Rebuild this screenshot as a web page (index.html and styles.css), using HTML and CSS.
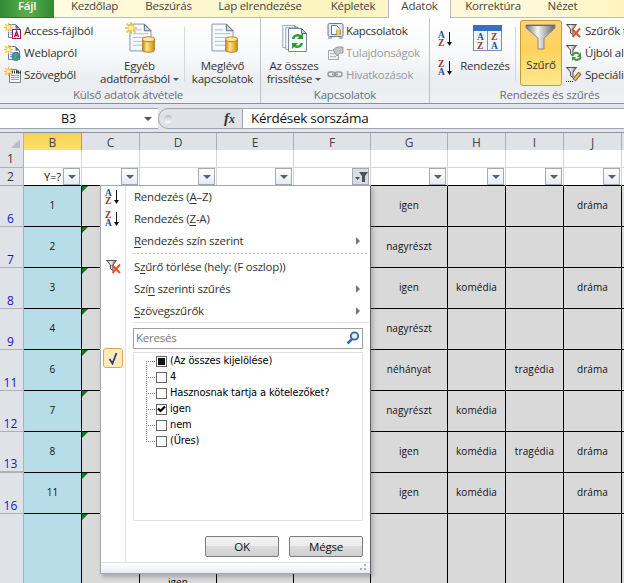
FILE: index.html
```html
<!DOCTYPE html>
<html lang="hu">
<head>
<meta charset="utf-8">
<title>Adatok</title>
<link rel="stylesheet" href="styles.css">
</head>
<body>
<svg class="defs" width="0" height="0">
  <defs>
    <linearGradient id="gold" x1="0" x2="1"><stop offset="0" stop-color="#c98a1c"/><stop offset=".35" stop-color="#ffe68a"/><stop offset="1" stop-color="#d08c16"/></linearGradient>
    <linearGradient id="steel" x1="0" x2="1"><stop offset="0" stop-color="#777"/><stop offset=".4" stop-color="#f4f4f4"/><stop offset="1" stop-color="#666"/></linearGradient>
    <symbol id="star" viewBox="0 0 12 12"><path d="M6 0v12M0 6h12M1.500 1.500l9 9M10.500 1.500l-9 9" stroke="#eebf3a" stroke-width="1.700"/><circle cx="6" cy="6" r="2.300" fill="#fff3a0"/></symbol>
    <symbol id="page" viewBox="0 0 24 30"><path d="M1 1h15l7 7v21H1z" fill="#f7fafe" stroke="#7f93ad"/><path d="M16 1v7h7z" fill="#c9d8ea" stroke="#4d6888"/><path d="M4 7h9M4 11h16M4 15h16M4 19h16M4 23h16" stroke="#a9bdd8"/></symbol>
    <symbol id="mini" viewBox="0 0 12 14"><path d="M.5.5h7l4 4v9H.5z" fill="#f7fafe" stroke="#6b819f"/><path d="M7.500.5v4h4z" fill="#4d6888"/><path d="M2 6.500h8M2 8.500h8M2 10.500h8" stroke="#8ea6c8"/></symbol>
    <symbol id="drum" viewBox="0 0 12 16"><path d="M.5 3v10c0 3 11 3 11 0V3z" fill="url(#gold)" stroke="#b98222"/><ellipse cx="6" cy="3" rx="5.500" ry="2.300" fill="#ffe9a0" stroke="#c58b20"/></symbol>
    <symbol id="az" viewBox="0 0 16 17"><text x="1" y="7.500" class="la">A</text><text x="1" y="16" class="lz">Z</text><path d="M12.500 2v13" stroke="#111"/><path d="M10 12h5l-2.500 4z" fill="#111"/></symbol>
    <symbol id="za" viewBox="0 0 16 17"><text x="1" y="7.500" class="lz">Z</text><text x="1" y="16" class="la">A</text><path d="M12.500 2v13" stroke="#111"/><path d="M10 12h5l-2.500 4z" fill="#111"/></symbol>
    <symbol id="funnel" viewBox="0 0 11 11"><path d="M.5.5h10L7 5v5.500L4.500 9V5z" fill="url(#steel)" stroke="#555"/></symbol>
    <symbol id="clear" viewBox="0 0 15 14"><use href="#funnel" width="11" height="11"/><path d="M6 5l8 8M14 4.500L6.500 13" stroke="#e4502c" stroke-width="2"/></symbol>
  </defs>
</svg>

<div class="app">
  <nav class="tabs">
    <span class="tab file">Fájl</span>
    <span class="tab home">Kezdőlap</span>
    <span class="tab insert">Beszúrás</span>
    <span class="tab layout">Lap elrendezése</span>
    <span class="tab formulas">Képletek</span>
    <span class="tab active">Adatok</span>
    <span class="tab review">Korrektúra</span>
    <span class="tab view">Nézet</span>
  </nav>

  <div class="ribbon">
    <section class="group g-ext">
      <div class="tools">
        <div class="stack">
          <div class="small"><svg width="17" height="16"><use href="#mini" x="4" y="1" width="12" height="14"/><use href="#star" width="9" height="9"/><rect x="8.500" y="6.500" width="8" height="9" fill="#fff" stroke="#a3174e"/><path d="M10.500 14l2-5.500 2 5.500M11 12.500h3" stroke="#a3174e" stroke-width="1.300" fill="none"/></svg><span>Access-fájlból</span></div>
          <div class="small"><svg width="17" height="16"><use href="#mini" x="4" y="1" width="12" height="14"/><use href="#star" width="9" height="9"/><circle cx="12" cy="11.500" r="4.500" fill="#3f7ebd"/><path d="M9 10l3-2 2 2-2 3 3 1-2 2-3-2z" fill="#4faa51"/></svg><span>Weblapról</span></div>
          <div class="small"><svg width="17" height="16"><use href="#mini" x="5" y="2" width="12" height="14"/><use href="#star" width="9" height="9"/><path d="M8 5h9" stroke="#333" stroke-dasharray="1 1" stroke-width="3"/></svg><span>Szövegből</span></div>
        </div>
        <div class="big other"><svg width="32" height="34"><use href="#page" x="5" y="2" width="23" height="29"/><use href="#star" x="1" y="1" width="12" height="12"/><use href="#drum" x="18" y="15" width="13" height="17"/></svg><span>Egyéb</span><span>adatforrásból<i class="drop"></i></span></div>
        <div class="sep"></div>
        <div class="big existing"><svg width="32" height="34"><use href="#page" x="4" y="2" width="23" height="29"/><use href="#drum" x="18" y="15" width="13" height="17"/></svg><span>Meglévő</span><span>kapcsolatok</span></div>
      </div>
      <h2>Külső adatok átvétele</h2>
    </section>

    <section class="group g-conn">
      <div class="tools">
        <div class="big refresh"><svg width="32" height="34"><use href="#page" x="4" y="3" width="19" height="25"/><use href="#page" x="7" y="5" width="19" height="25"/><path d="M10.500 7.500h13l5 5v18h-18z" fill="#fff" stroke="#748aa4"/><path d="M23.500 7.500v5h5z" fill="#c9d8ea" stroke="#4d6888"/><path d="M15 18c1-4 6-5 8-2M24 22c-1 4-6 5-8 2" fill="none" stroke="#2f9a3a" stroke-width="2.500"/><path d="M25 12v6h-6zM14 28v-6h6z" fill="#2f9a3a"/></svg><span>Az összes</span><span>frissítése<i class="drop"></i></span></div>
        <div class="stack">
          <div class="small"><svg width="17" height="16"><rect x="1" y=".5" width="15" height="13" rx="1.500" fill="#dfe7f1" stroke="#627a98"/><path d="M1 15h4M12 15h4" stroke="#627a98"/><path d="M4.500 2.500h5l3 3v6h-8z" fill="#fff" stroke="#617893"/><use href="#drum" x="9" y="5" width="5" height="8"/></svg><span>Kapcsolatok</span></div>
          <div class="small off"><svg width="17" height="16"><rect x="1.500" y="5.500" width="10" height="9" fill="#eee" stroke="#aaa"/><path d="M3 8.500h6M3 11.500h6" stroke="#bbb"/><path d="M6 5l4-3h6v6h-3l-3 3z" fill="#c4c4c4" stroke="#999"/></svg><span>Tulajdonságok</span></div>
          <div class="small off"><svg width="17" height="16" fill="none" stroke="#999" stroke-width="1.500"><rect x="1" y="5" width="7" height="4.500" rx="2.200"/><rect x="8" y="5" width="7" height="4.500" rx="2.200"/><path d="M5 7.300h6"/></svg><span>Hivatkozások</span></div>
        </div>
      </div>
      <h2>Kapcsolatok</h2>
    </section>

    <section class="group g-sort">
      <div class="tools">
        <div class="quick"><svg width="16" height="17"><use href="#az"/></svg><svg width="16" height="17"><use href="#za"/></svg></div>
        <div class="big sort"><svg width="32" height="34"><rect x="2.500" y="4.500" width="28" height="25" fill="#f3f7fc" stroke="#7890b4"/><path d="M2 4h29v6H2z" fill="#386fc5"/><path d="M16.500 10v20" stroke="#8798b4"/><text x="6" y="19" class="la">A</text><text x="6" y="28" class="lz">Z</text><text x="20" y="19" class="lz">Z</text><text x="20" y="28" class="la">A</text></svg><span>Rendezés</span></div>
        <div class="sep"></div>
        <div class="big filter"><svg width="32" height="34"><path d="M1 4h29v3L19 17v11h-6V17L1 7z" fill="url(#steel)" stroke="#888"/><path d="M1 4.500h29" stroke="#666"/></svg><span>Szűrő</span></div>
        <div class="stack">
          <div class="small"><svg width="16" height="14"><use href="#clear" width="15" height="14"/></svg><span>Szűrők törlése</span></div>
          <div class="small"><svg width="16" height="16"><use href="#funnel" width="11" height="11"/><path d="M6 11c2-4 5-4 7-2M15 12c-2 4-5 3-7 2" fill="none" stroke="#46953e" stroke-width="2"/><path d="M15 7v5h-4zM6 16v-4h4z" fill="#46953e"/></svg><span>Újból alkalmaz</span></div>
          <div class="small"><svg width="16" height="16"><use href="#funnel" width="11" height="11"/><path d="M0 14.500h8" stroke="#111" stroke-dasharray="1 1"/><path d="M8 13l6-7" stroke="#7e5316" stroke-width="4"/><path d="M8.500 12.500l5-6" stroke="#f1bd56" stroke-width="2"/></svg><span>Speciális</span></div>
        </div>
      </div>
      <h2>Rendezés és szűrés</h2>
    </section>
  </div>

  <div class="formula">
    <div class="namebox"><span>B3</span><i class="drop"></i></div>
    <div class="fx"><i class="knob"></i><b>f<small>x</small></b></div>
    <div class="input">Kérdések sorszáma</div>
  </div>

  <div class="sheet">
    <div class="row heads"><div class="rh"><i class="corner"></i></div><div class="sel">B</div><div>C</div><div>D</div><div>E</div><div>F</div><div>G</div><div>H</div><div>I</div><div>J</div><div></div></div>
    <div class="row blank"><div class="rh">1</div><div></div><div></div><div></div><div></div><div></div><div></div><div></div><div></div><div></div><div></div></div>
    <div class="row filters"><div class="rh">2</div><div>Y=?<i class="fb"></i></div><div><i class="fb"></i></div><div><i class="fb"></i></div><div><i class="fb"></i></div><div><i class="fb on"><svg width="14" height="12"><path d="M1 6h5L3.500 9zM5 1h9l-3 4v6H8V5z" fill="#4b525b"/></svg></i></div><div><i class="fb"></i></div><div><i class="fb"></i></div><div><i class="fb"></i></div><div><i class="fb"></i></div><div></div></div>
    <div class="row data"><div class="rh">6</div><div class="b">1</div><div class="c"></div><div></div><div></div><div></div><div>igen</div><div></div><div></div><div>dráma</div><div></div></div>
    <div class="row data"><div class="rh">7</div><div class="b">2</div><div class="c"></div><div></div><div></div><div></div><div>nagyrészt</div><div></div><div></div><div></div><div></div></div>
    <div class="row data"><div class="rh">8</div><div class="b">3</div><div class="c"></div><div></div><div></div><div></div><div>igen</div><div>komédia</div><div></div><div>dráma</div><div></div></div>
    <div class="row data"><div class="rh">9</div><div class="b">4</div><div class="c"></div><div></div><div></div><div></div><div>nagyrészt</div><div></div><div></div><div></div><div></div></div>
    <div class="row data"><div class="rh">11</div><div class="b">6</div><div class="c"></div><div></div><div></div><div></div><div>néhányat</div><div></div><div>tragédia</div><div>dráma</div><div></div></div>
    <div class="row data"><div class="rh">12</div><div class="b">7</div><div class="c"></div><div></div><div></div><div></div><div>nagyrészt</div><div>komédia</div><div></div><div></div><div></div></div>
    <div class="row data gap"><div class="rh">13</div><div class="b">8</div><div class="c"></div><div></div><div></div><div></div><div>igen</div><div>komédia</div><div>tragédia</div><div>dráma</div><div></div></div>
    <div class="row data"><div class="rh">16</div><div class="b">11</div><div class="c"></div><div></div><div></div><div></div><div>igen</div><div>komédia</div><div></div><div>dráma</div><div></div></div>
    <div class="row data last"><div class="rh"></div><div class="b"></div><div class="c"></div><div>igen</div><div></div><div></div><div></div><div></div><div></div><div></div><div></div></div>
  </div>

  <div class="menu">
    <div class="cols">
      <div class="gutter">
        <svg class="i-az" width="16" height="17"><use href="#az"/></svg>
        <svg class="i-za" width="16" height="17"><use href="#za"/></svg>
        <svg class="i-clear" width="15" height="14"><use href="#clear" width="15" height="14"/></svg>
        <div class="check"><svg width="10" height="13"><path d="M1.500 7l3 4.500L8.500 1" fill="none" stroke="#2d3a7c" stroke-width="1.800"/></svg></div>
      </div>
      <div class="main">
        <div class="item"><span>Rendezés (<u>A</u>–Z)</span></div>
        <div class="item"><span>Rendezés (<u>Z</u>-A)</span></div>
        <div class="item"><span><u>R</u>endezés szín szerint</span><i class="arrow"></i></div>
        <div class="dash"></div>
        <div class="item"><span>S<u>z</u>űrő törlése (hely: (F oszlop))</span></div>
        <div class="item"><span>Szí<u>n</u> szerinti szűrés</span><i class="arrow"></i></div>
        <div class="item"><span><u>S</u>zövegszűrők</span><i class="arrow"></i></div>
        <div class="line"></div>
        <div class="search"><span>Keresés</span><svg width="14" height="14"><circle cx="8.500" cy="5" r="3.700" fill="#e4f0fb" stroke="#3566b0" stroke-width="1.800"/><path d="M6 8l-4.500 4.500" stroke="#3566b0" stroke-width="2.500"/></svg></div>
        <div class="list">
          <div class="node"><i class="box some"></i><span>(Az összes kijelölése)</span></div>
          <div class="node"><i class="box"></i><span>4</span></div>
          <div class="node"><i class="box"></i><span>Hasznosnak tartja a kötelezőket?</span></div>
          <div class="node"><i class="box"><svg width="9" height="9"><path d="M1 3.500l2.500 2.500L8 1.500" fill="none" stroke="#000" stroke-width="2.200"/></svg></i><span>igen</span></div>
          <div class="node"><i class="box"></i><span>nem</span></div>
          <div class="node end"><i class="box"></i><span>(Üres)</span></div>
        </div>
        <div class="buttons"><div class="btn">OK</div><div class="btn">Mégse</div></div>
      </div>
    </div>
    <div class="grip"><svg width="8" height="8" fill="#a9afb8"><path d="M4 0h2v2H4zM4 4h2v2H4zM0 4h2v2H0z"/></svg></div>
  </div>
</div>
</body>
</html>
```
FILE: styles.css
```css
* { box-sizing: border-box; }
body { margin: 0; overflow: hidden; font: 11.5px/16px "Open Sans", "Noto Sans", sans-serif; color: #333; }
i { font-style: normal; }
.defs { position: absolute; }
.app { position: relative; width: 624px; height: 583px; overflow: hidden; background: #dcdfe4; }
.la, .lz { font: bold 9.500px "Liberation Serif", serif; letter-spacing: 0; }
.la { fill: #294f98; }
.lz { fill: #983033; }
.drop { display: inline-block; border: 3px solid transparent; border-top: 3px solid #555; border-bottom: 0; margin-left: 3px; vertical-align: 2px; }

/* tab strip */
.tabs { display: flex; height: 18px; letter-spacing: -.25px; background: linear-gradient(90deg, #fffde8, #fcf3bd 55%, #fffbe0 80%, #fff3c0); }
.tab { height: 18px; line-height: 12px; text-align: center; white-space: nowrap; border-bottom: 1px solid #b9bcc2; color: #444; }
.file { width: 54px; color: #fff; background: linear-gradient(90deg, #2f8a36, #5cb04b 50%, #2f8a36); border-bottom-color: #277a2f; font-weight: 600; }
.home { width: 81px; }
.insert { width: 67px; }
.layout { width: 116px; }
.formulas { width: 70px; }
.active { width: 63px; background: #fff; border: solid #b9bcc2; border-width: 0 1px; }
.review { width: 84px; }
.view { flex: 1; padding-right: 34px; }

/* ribbon */
.ribbon { display: flex; height: 86px; letter-spacing: -.22px; background: linear-gradient(#fff, #f8f9fa 45%, #e9ecf0 75%, #eff1f4); border-bottom: 1px solid #8b9097; }
.group { display: flex; flex-direction: column; border-right: 1px solid #bfc3c9; height: 85px; flex: none; }
.g-ext { width: 261px; }
.g-conn { width: 169px; }
.g-sort { width: 236px; border: 0; }
.tools { display: flex; height: 69px; }
.group h2 { margin: 0; font: 11.500px/16px "Open Sans", sans-serif; color: #69707c; text-align: center; padding-right: 4px; }
.g-conn h2 { padding-right: 0; }
.g-sort h2 { padding: 0 0 0 3px; }
.stack { display: flex; flex-direction: column; padding-top: 2px; }
.small { display: flex; align-items: center; height: 22px; gap: 3px; white-space: nowrap; }
.g-conn .small { gap: 2px; letter-spacing: -.3px; }
.off { color: #9a9a9a; }
.big { display: flex; flex-direction: column; align-items: center; padding-top: 3px; line-height: 13px; white-space: nowrap; }
.big svg { flex: none; margin-bottom: 4px; }
.g-ext .stack { width: 98px; padding-left: 4px; }
.other { width: 83px; }
.existing { width: 75px; }
.sep { width: 1px; height: 54px; margin-top: 9px; margin-left: 3px; background: #d4d7db; }
.refresh { width: 66px; }
.quick { width: 32px; padding: 12px 0 0 7px; display: flex; flex-direction: column; gap: 12px; }
.sort { width: 50px; }
.sort span { margin-right: 4px; }
.filter { width: 42px; height: 66px; margin: 2px 4px 0 4px; padding-top: 0; border: 1px solid #c99a2d; border-radius: 3px; background: linear-gradient(#fbd476, #fed35b 45%, #ffe98f); }
.filter svg { margin-bottom: 3px; }

/* formula bar */
.formula { display: flex; height: 29px; padding-top: 4px; background: #e2e4ee; border-bottom: 1px solid #8d929a; font: 14px/20px "Open Sans", sans-serif; color: #111; }
.formula > div { height: 21px; border: solid #a0a5ad; border-width: 1px 0; background: #fff; }
.namebox { display: flex; width: 158px; align-items: center; font-size: 12.500px; }
.namebox span { width: 137px; text-align: center; }
.namebox .drop { border-width: 4px 4px 0; margin-left: 7px; }
.formula .fx { width: 85px; display: flex; align-items: center; justify-content: space-between; padding: 0 7px 0 5px; background: #dfe2e7; border-left-width: 1px; border-radius: 10px 0 0 10px; border-right: 1px solid #a0a5ad; }
.knob { width: 8px; height: 8px; border-radius: 50%; background: linear-gradient(#b7bcc4, #fff); }
.fx b { font: italic bold 15px/18px "Liberation Serif", serif; color: #333; }
.fx small { font-size: 12px; }
.formula .input { flex: 1; padding-left: 8px; font-size: 13.500px; line-height: 18px; letter-spacing: -.28px; white-space: nowrap; }

/* worksheet */
.row { display: grid; grid-template-columns: 24px 58px 58px 77px 77px 77px 77px 58px 58px 58px 77px; width: 699px; }
.row > div { display: flex; align-items: center; justify-content: center; border: solid #d4d6da; border-width: 0 1px 1px 0; min-width: 0; }
.row > .rh { font-size: 12px; color: #333; background: #dfe2e7; border-color: #aeb2b8; padding-right: 2px; }
.heads { height: 17px; }
.heads > div { background: #dfe2e7; border-color: #aaaeb5; color: #444; font-size: 12px; padding-top: 2px; }
.heads > .sel { background: linear-gradient(#f8d15d, #ffe469); border-color: #c39a3e; }
.heads .rh { align-items: flex-end; justify-content: flex-end; padding: 0 3px 3px 0; }
.corner { border-left: 9px solid transparent; border-bottom: 9px solid #b9bcc2; }
.blank { height: 18px; }
.blank > div, .filters > div { background: #fff; }
.filters { height: 18px; }
.filters > div { justify-content: flex-end; padding-right: 1px; color: #111; font-size: 11px; letter-spacing: -.1px; border-bottom-color: #000; }
.filters > .rh { justify-content: center; border-bottom-color: #d7a04e; }
.fb { display: flex; align-items: center; justify-content: center; width: 17px; height: 17px; margin-left: 2px; border: 1px solid #a4a9b2; background: linear-gradient(#fff, #e6ebf2); flex: none; }
.fb::after { content: ""; border: 4px solid transparent; border-top-color: #5a5f66; border-bottom: 0; }
.fb.on { background: #d9dde3; }
.fb.on::after { content: none; }
.data { height: 41px; }
.data > div { background: #d9d9d9; border-color: #000; color: #111; font-size: 10px; letter-spacing: .1px; padding-bottom: 2px; }
.data > .rh { align-items: flex-end; color: #1a14c8; font-size: 12px; line-height: 14px; padding-bottom: 0; }
.gap > .rh { border-bottom-width: 2px; }
.data > .b { background: #b7dde8; }
.data > .c { background: linear-gradient(135deg, #0b7a12 4px, #d9d9d9 4.500px); }
.last { height: 130px; }
.last > div { align-items: flex-start; padding-top: 60px; }

/* filter menu */
.menu { position: absolute; left: 100px; top: 185px; width: 271px; height: 389px; background: #fff; border: 1px solid #a3a7b0; border-right-color: #62626d; box-shadow: 2px 3px 4px rgba(60, 60, 80, .3); letter-spacing: -.23px; }
.cols { display: flex; height: 376px; }
.gutter { width: 25px; border-right: 1px solid #e1e3e6; display: flex; flex-direction: column; }
.gutter svg { flex: none; }
.i-az { margin: 2px 0 0 3px; }
.i-za { margin: 5px 0 0 3px; }
.i-clear { margin: 33px 0 0 5px; }
.check { width: 20px; height: 20px; margin: 74px 0 0 2px; display: flex; align-items: center; justify-content: center; border: 1px solid #e6a34e; border-radius: 3px; background: #fcecb9; }
.main { width: 237px; padding-left: 7px; }
.item { display: flex; align-items: center; justify-content: space-between; height: 22px; padding: 0 3px 0 1px; white-space: nowrap; }
u { text-underline-offset: 2px; }
.arrow { border: 4px solid transparent; border-left-color: #777; border-right: 0; }
.dash { height: 1px; margin: 1px 0 2px; width: 235px; background: repeating-linear-gradient(90deg, #c4c6ca 0 2px, transparent 2px 4px); }
.line { height: 1px; margin: 0 0 5px; width: 236px; background: #dfe1e4; }
.search { display: flex; align-items: center; justify-content: space-between; height: 21px; padding: 0 2px 1px; border: 1px solid #9b9fa6; color: #777; }
.list { height: 169px; margin-top: 3px; padding: 0 0 0 12px; border: 1px solid #dfe1e4; font: 11px/16px "DejaVu Sans Condensed", "DejaVu Sans", sans-serif; font-stretch: condensed; letter-spacing: -.13px; color: #000; }
.node { display: flex; align-items: center; height: 16px; gap: 3px; white-space: nowrap; background: repeating-linear-gradient(90deg, #888 0 1px, transparent 1px 2px) 0 8px / 10px 1px no-repeat, repeating-linear-gradient(#888 0 1px, transparent 1px 2px) 0 0 / 1px 16px no-repeat; }
.node:first-child { background-position: 0 8px, 0 8px; }
.node.end { background-size: 10px 1px, 1px 8px; }
.box { display: flex; align-items: center; justify-content: center; width: 11px; height: 11px; margin-left: 10px; border: 1px solid #666; background: #fff; }
.some::after { content: ""; width: 7px; height: 7px; background: #111; }
.buttons { display: flex; justify-content: flex-end; gap: 10px; margin-top: 15px; }
.btn { width: 74px; height: 21px; line-height: 20px; text-align: center; color: #111; border: 1px solid #7b7d82; border-radius: 2px; background: linear-gradient(#f3f3f3, #ebebeb 49%, #dcdcdc 50%, #cfcfcf); }
.grip { display: flex; align-items: center; justify-content: flex-end; height: 11px; padding-right: 2px; border-top: 1px solid #dfe3e7; background: linear-gradient(#fff, #e8ecf0); }
```
